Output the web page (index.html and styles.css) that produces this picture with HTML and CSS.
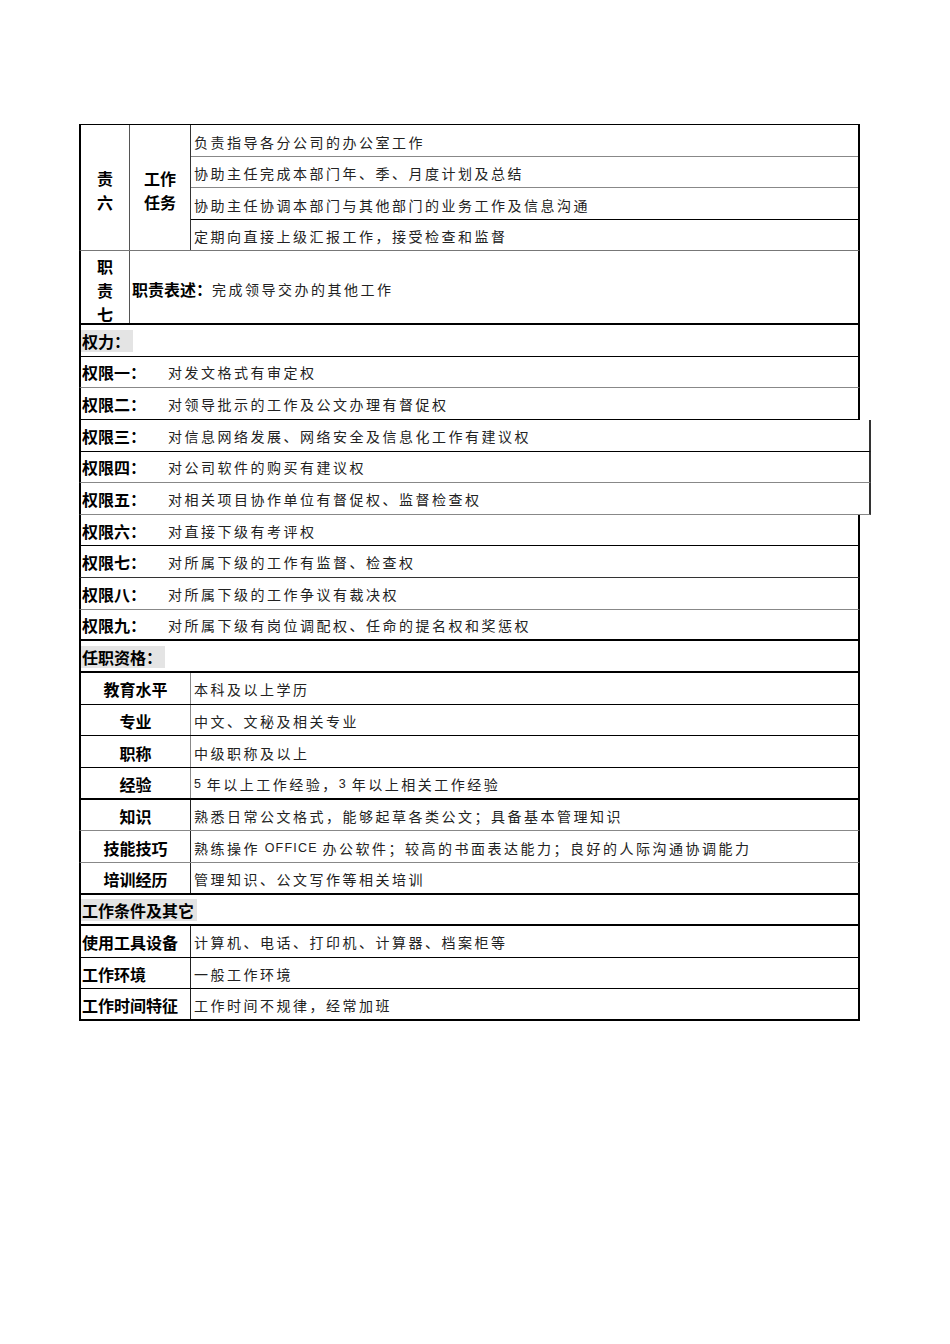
FILE: index.html
```html
<!DOCTYPE html>
<html lang="zh-CN">
<head>
<meta charset="utf-8">
<title>岗位说明书</title>
<link rel="stylesheet" href="styles.css">
</head>
<body>
<div class="sheet">
  <div class="duty6">
    <div class="c1 vert">责<br>六</div>
    <div class="c2 vert">工作<br>任务</div>
    <div class="c3">
      <div class="sub txt line-g">负责指导各分公司的办公室工作</div>
      <div class="sub txt line-g">协助主任完成本部门年、季、月度计划及总结</div>
      <div class="sub txt line-k">协助主任协调本部门与其他部门的业务工作及信息沟通</div>
      <div class="sub txt">定期向直接上级汇报工作，接受检查和监督</div>
    </div>
  </div>
  <div class="duty7">
    <div class="c1 vert">职<br>责<br>七</div>
    <div class="desc"><span class="lab">职责表述：</span><span class="txt">完成领导交办的其他工作</span></div>
  </div>

  <div class="row b-k"><span class="lab hl">权力：</span></div>
  <div class="row b-g"><span class="lab pl">权限一：</span><span class="txt">对发文格式有审定权</span></div>
  <div class="row b-k"><span class="lab pl">权限二：</span><span class="txt">对领导批示的工作及公文办理有督促权</span></div>
  <div class="row wide b-k"><span class="lab pl">权限三：</span><span class="txt">对信息网络发展、网络安全及信息化工作有建议权</span></div>
  <div class="row wide b-g"><span class="lab pl">权限四：</span><span class="txt">对公司软件的购买有建议权</span></div>
  <div class="row wide b-g"><span class="lab pl">权限五：</span><span class="txt">对相关项目协作单位有督促权、监督检查权</span></div>
  <div class="row b-k"><span class="lab pl">权限六：</span><span class="txt">对直接下级有考评权</span></div>
  <div class="row b-l"><span class="lab pl">权限七：</span><span class="txt">对所属下级的工作有监督、检查权</span></div>
  <div class="row b-g"><span class="lab pl">权限八：</span><span class="txt">对所属下级的工作争议有裁决权</span></div>
  <div class="row b-thick"><span class="lab pl">权限九：</span><span class="txt">对所属下级有岗位调配权、任命的提名权和奖惩权</span></div>

  <div class="row b-thick"><span class="lab hl">任职资格：</span></div>
  <div class="row b-k q"><span class="lab qlab g">教育水平</span><span class="txt qtxt">本科及以上学历</span></div>
  <div class="row b-k q"><span class="lab qlab g">专业</span><span class="txt qtxt">中文、文秘及相关专业</span></div>
  <div class="row b-k q"><span class="lab qlab g">职称</span><span class="txt qtxt">中级职称及以上</span></div>
  <div class="row b-thick q"><span class="lab qlab g">经验</span><span class="txt qtxt"><span class="lat">5 </span>年以上工作经验，<span class="lat">3 </span>年以上相关工作经验</span></div>
  <div class="row b-g q"><span class="lab qlab">知识</span><span class="txt qtxt">熟悉日常公文格式，能够起草各类公文；具备基本管理知识</span></div>
  <div class="row b-g q"><span class="lab qlab">技能技巧</span><span class="txt qtxt">熟练操作<span class="lat"> OFFICE </span>办公软件；较高的书面表达能力；良好的人际沟通协调能力</span></div>
  <div class="row b-thick q"><span class="lab qlab">培训经历</span><span class="txt qtxt">管理知识、公文写作等相关培训</span></div>

  <div class="row b-thick"><span class="lab hl">工作条件及其它</span></div>
  <div class="row b-k q"><span class="lab clab">使用工具设备</span><span class="txt qtxt">计算机、电话、打印机、计算器、档案柜等</span></div>
  <div class="row b-k q"><span class="lab clab">工作环境</span><span class="txt qtxt">一般工作环境</span></div>
  <div class="row b-thick q"><span class="lab clab">工作时间特征</span><span class="txt qtxt">工作时间不规律，经常加班</span></div>
</div>
</body>
</html>
```

FILE: styles.css
```css
body {
  margin: 0;
  background: #ffffff;
  font-family: "Noto Sans CJK SC", "Noto Sans", sans-serif;
  color: #000;
}

.sheet {
  width: 781px;
  margin: 124px 0 0 79px;
}

.lab {
  font-weight: 700;
  font-size: 16px;
  color: #000;
  white-space: nowrap;
}

.txt {
  font-size: 14px;
  letter-spacing: 2.5px;
  color: #222;
  white-space: nowrap;
}

.lat {
  font-family: "Liberation Sans", sans-serif;
  font-size: 12.5px;
  letter-spacing: 1.2px;
  white-space: pre;
}

/* duty block 6 */
.duty6 {
  display: flex;
  height: 127px;
  box-sizing: border-box;
  border-top: 1px solid #000;
  border-left: 2px solid #000;
  border-right: 2px solid #000;
  border-bottom: 1px solid #777;
}

.c1 {
  width: 49px;
  flex: none;
  box-sizing: border-box;
  border-right: 1px solid #555;
}

.c2 {
  width: 61px;
  flex: none;
  box-sizing: border-box;
  border-right: 1px solid #333;
}

.vert {
  display: flex;
  align-items: center;
  justify-content: center;
  text-align: center;
  font-weight: 700;
  font-size: 16px;
  line-height: 24px;
  padding-top: 4px;
}

.c3 {
  flex: 1;
  display: flex;
  flex-direction: column;
}

.sub {
  flex: 1;
  display: flex;
  align-items: center;
  padding: 3px 0 0 3px;
  box-sizing: border-box;
}

.line-g { border-bottom: 1px solid #888; }
.line-k { border-bottom: 1px solid #000; }

/* duty block 7 */
.duty7 {
  display: flex;
  height: 74px;
  box-sizing: border-box;
  border-left: 2px solid #000;
  border-right: 2px solid #000;
  border-bottom: 2px solid #000;
}

.duty7 .vert {
  padding-top: 6px;
}

.desc {
  display: flex;
  align-items: center;
  padding: 4px 0 0 2px;
}

/* generic rows */
.row {
  display: flex;
  align-items: center;
  height: 31.65px;
  box-sizing: border-box;
  border-left: 2px solid #000;
  border-right: 2px solid #000;
  padding-top: 1px;
}

.row.wide {
  width: 792px;
  border-right: 2px solid #333;
}

.b-k { border-bottom: 1px solid #000; }
.b-g { border-bottom: 1px solid #888; }
.b-l { border-bottom: 1px solid #333; }
.b-thick { border-bottom: 2px solid #000; }

.hl {
  background: #e4e4e4;
  padding: 0 3px 0 1px;
  line-height: 22px;
}

.pl {
  width: 87px;
  flex: none;
  padding-left: 1px;
  box-sizing: border-box;
}

.row.q {
  align-items: stretch;
  padding-top: 0;
}

.qlab,
.clab {
  width: 110px;
  flex: none;
  box-sizing: border-box;
  border-right: 1px solid #222;
  display: flex;
  align-items: center;
  padding-top: 2px;
}

.qlab {
  justify-content: center;
}

.qlab.g {
  border-right-color: #888;
}

.clab {
  padding-left: 1px;
}

.qtxt {
  display: flex;
  align-items: center;
  padding: 2px 0 0 3px;
}
```
